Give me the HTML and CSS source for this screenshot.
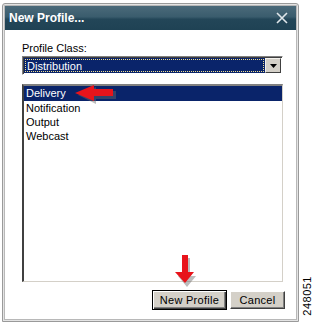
FILE: index.html
```html
<!DOCTYPE html>
<html lang="en">
<head>
    <meta charset="UTF-8">
    <title>New Profile</title>
    <link rel="stylesheet" href="styles.css">
</head>
<body>
    <div class="page">
        <div class="dialog">
            <div class="titlebar">
                <span class="title">New Profile...</span>
                <svg class="close" width="12" height="12" viewBox="0 0 12 12">
                    <path d="M1 1 L11 11 M11 1 L1 11" stroke="#dfe6ea" stroke-width="1.6"/>
                </svg>
            </div>
            <div class="content">
                <div class="label">Profile Class:</div>
                <div class="select">
                    <div class="select-value"><span>Distribution</span></div>
                    <div class="select-button">
                        <svg width="7" height="4" viewBox="0 0 7 4"><path d="M0 0 H7 L3.5 4 Z" fill="#000"/></svg>
                    </div>
                </div>
                <div class="listbox">
                    <div class="item selected">Delivery</div>
                    <div class="item">Notification</div>
                    <div class="item">Output</div>
                    <div class="item">Webcast</div>
                    <!-- callout arrow pointing at the selected class -->
                    <svg class="arrow-left" width="42" height="20" viewBox="0 0 42 20">
                        <path d="M3 10 L21 2 L21 6 L41 6 L41 14 L21 14 L21 19 Z" fill="#6b6b6b" opacity="0.45"/>
                        <path d="M0 8 L19 0 L19 4 L38 4 L38 11 L19 11 L19 16 Z" fill="#e8141b"/>
                    </svg>
                </div>
                <div class="buttons">
                    <button class="btn default">New Profile</button>
                    <button class="btn">Cancel</button>
                    <!-- callout arrow pointing at the button -->
                    <svg class="arrow-down" width="24" height="32" viewBox="0 0 24 32">
                        <path d="M10 3 L16 3 L16 21 L22 21 L13 32 L4 21 L10 21 Z" fill="#6b6b6b" opacity="0.45"/>
                        <path d="M8 0 L14 0 L14 17 L20 17 L11 28 L1 17 L8 17 Z" fill="#e8141b"/>
                    </svg>
                </div>
            </div>
        </div>
        <div class="figure-id">248051</div>
    </div>
</body>
</html>
```

FILE: styles.css
```css
* {
    box-sizing: border-box;
}
body {
    margin: 0;
    background-color: #ffffff;
    font-family: "Liberation Sans", Arial, sans-serif;
    font-size: 11px;
    color: #000000;
}
.page {
    display: flex;
    align-items: flex-start;
    padding: 3px 0 0 2px;
}
.dialog {
    width: 297px;
    height: 319px;
    border: 1px solid #9a9a9a;
    border-radius: 3px 3px 0 0;
    box-shadow: inset 0 0 0 1px #e4e4e4, inset 0 0 0 2px #b8b8b8;
    padding: 2px;
    display: flex;
    flex-direction: column;
}
.titlebar {
    height: 24px;
    background: linear-gradient(#4b6a7a 0%, #3a5c6d 45%, #234658 55%, #1f4254 100%);
    display: flex;
    align-items: center;
    justify-content: space-between;
    padding: 0 8px 0 4px;
}
.title {
    color: #ffffff;
    font-weight: bold;
    font-size: 12px;
}
.close {
    display: block;
}
.content {
    flex: 1;
    padding: 12px 11px 0 17px;
    display: flex;
    flex-direction: column;
}
.label {
    height: 13px;
    line-height: 13px;
    margin-bottom: 1px;
}
.select {
    height: 19px;
    width: 261px;
    display: flex;
    border: 1px solid;
    border-color: #808080 #ffffff #ffffff #808080;
    box-shadow: inset 1px 1px 0 #404040;
    padding: 1px;
    background-color: #ffffff;
}
.select-value {
    flex: 1;
    background-color: #0a246a;
    padding: 1px;
}
.select-value span {
    display: block;
    height: 100%;
    border: 1px dotted #f0e090;
    color: #ffffff;
    line-height: 13px;
    padding-left: 1px;
}
.select-button {
    width: 16px;
    background-color: #d4d0c8;
    border: 1px solid;
    border-color: #f4f2ee #404040 #404040 #f4f2ee;
    display: flex;
    align-items: center;
    justify-content: center;
}
.select-button svg {
    display: block;
}
.listbox {
    position: relative;
    margin-top: 9px;
    width: 261px;
    height: 198px;
    border: 1px solid;
    border-color: #808080 #d4d0c8 #d4d0c8 #404040;
    border-top-width: 2px;
    border-left-width: 2px;
    background-color: #ffffff;
}
.item {
    height: 14px;
    line-height: 14px;
    padding-left: 2px;
}
.item.selected {
    height: 15px;
    background-color: #0a246a;
    color: #ffffff;
}
.arrow-left {
    position: absolute;
    left: 51px;
    top: -1px;
}
.buttons {
    position: relative;
    display: flex;
    justify-content: flex-end;
    align-items: center;
    gap: 3px;
    margin-top: 8px;
    width: 263px;
}
.btn {
    font-family: "Liberation Sans", Arial, sans-serif;
    font-size: 11px;
    letter-spacing: 0.3px;
    white-space: nowrap;
    height: 18px;
    width: 55px;
    padding: 0;
    background-color: #d4d0c8;
    border: 1px solid;
    border-color: #ffffff #404040 #404040 #ffffff;
    box-shadow: inset -1px -1px 0 #808080;
    color: #000000;
}
.btn.default {
    width: 75px;
    height: 20px;
    border-color: #000000;
    box-shadow: inset 1px 1px 0 #ffffff, inset -1px -1px 0 #404040, inset -2px -2px 0 #808080;
}
.arrow-down {
    position: absolute;
    left: 152px;
    top: -35px;
}
.figure-id {
    writing-mode: vertical-rl;
    transform: rotate(180deg);
    align-self: flex-end;
    margin-bottom: 6px;
    margin-left: 2px;
    font-size: 11px;
    letter-spacing: 0.5px;
    line-height: 12px;
}
```
